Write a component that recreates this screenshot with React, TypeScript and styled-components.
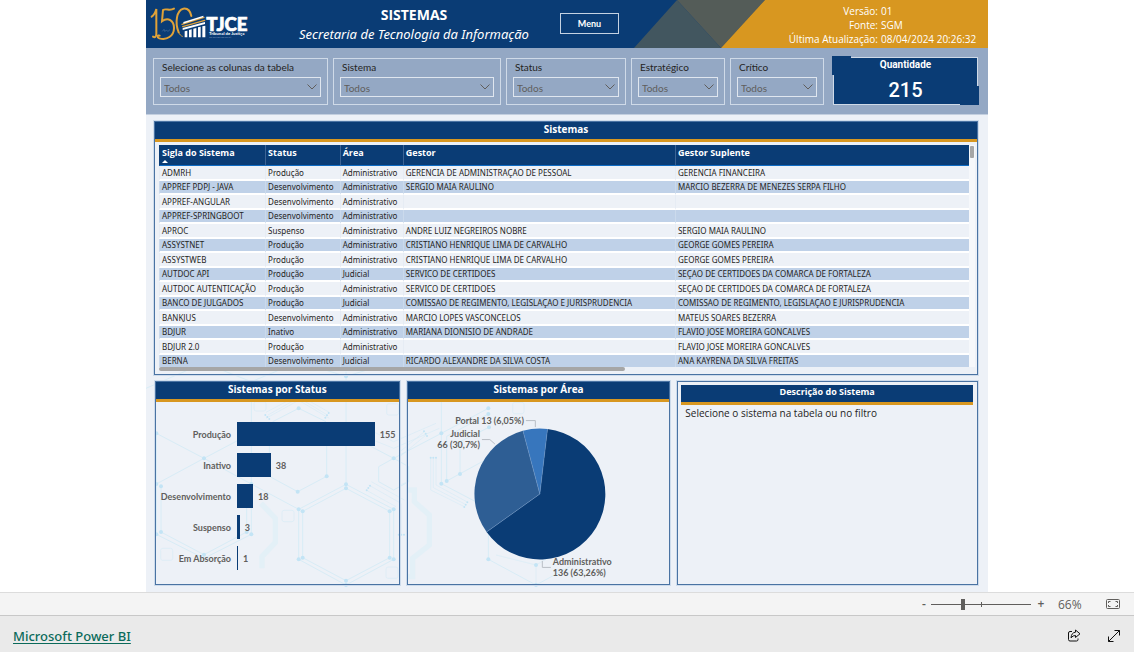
import React from 'react';
import styled, { createGlobalStyle } from 'styled-components';

const navy = '#0a3c75';
const orange = '#d89720';
const frame = '#4a73a3';
const ui = `'Open Sans', 'Noto Sans', sans-serif`;
const noto = `'Noto Sans', 'Open Sans', sans-serif`;
const narrow = `Lato, 'Open Sans', sans-serif`;
const din = `Roboto, 'Liberation Sans', sans-serif`;

const GlobalStyle = createGlobalStyle`
  * { box-sizing: border-box; }
  html, body, #root { min-height: 100vh; }
  body { margin: 0; background: #fff; font-family: ${ui}; color: #252423; }
  h1, h2, p, dl, dd, dt { margin: 0; }
  button, select, input { font: inherit; margin: 0; }
`;

const Page = styled.div`
  min-height: 100vh;
  display: flex;
  flex-direction: column;
`;

const Report = styled.main`
  position: relative;
  flex: 1;
  width: 100%;
  max-width: 842px;
  margin: 0 auto;
  background: #edf1f7;
  display: flex;
  flex-direction: column;
`;

const Header = styled.header`
  position: relative;
  height: 48px;
  background: ${navy};
  color: #fff;
  display: flex;
  align-items: center;
  overflow: hidden;
`;

const HeaderShapes = styled.svg`
  position: absolute;
  right: 0;
  top: 0;
  width: 354px;
  height: 48px;
`;

const Logo = styled.svg`
  width: 105px;
  height: 48px;
  flex: none;
`;

const Heading = styled.div`
  flex: none;
  width: 326px;
  text-align: center;
  white-space: nowrap;
`;

const Title = styled.h1`
  font-size: 14px;
  line-height: 18px;
  font-weight: 700;
  padding-top: 1px;
`;

const Subtitle = styled.p`
  font-family: ${noto};
  font-size: 13px;
  line-height: 20px;
  font-style: italic;
`;

const MenuButton = styled.button`
  position: relative;
  flex: none;
  width: 59px;
  height: 21px;
  margin: 0 auto 2px -17px;
  padding: 0;
  border: 1px solid #c5d2e2;
  background: ${navy};
  color: #fff;
  font-family: ${narrow};
  font-size: 9px;
  font-weight: 700;
`;

const Meta = styled.dl`
  position: relative;
  display: grid;
  grid-template-columns: auto 96px;
  column-gap: 3px;
  padding: 1px 11px 0 0;
  font-size: 10px;
  line-height: 14px;
  white-space: nowrap;
  dt { text-align: right; }
`;

const Filters = styled.section`
  height: 67px;
  padding: 10px 10px 9px 7px;
  background: #94a8c4;
  border-bottom: 1px solid #c3cfdf;
  display: grid;
  grid-template-columns: 175fr 168fr 120fr 94fr 94fr 149fr;
  column-gap: 5px;
`;

const FilterBox = styled.div`
  min-width: 0;
  border: 1px solid #cfdae8;
  padding: 0 6px;
  font-family: ${narrow};
  label { display: block; font-size: 10px; line-height: 16px; padding-left: 2px; white-space: nowrap; }
`;

const SelectWrap = styled.div`
  position: relative;
  margin-top: 2px;
  svg { position: absolute; right: 4px; top: 7px; pointer-events: none; }
`;

const Select = styled.select`
  display: block;
  width: 100%;
  height: 20px;
  appearance: none;
  border: 1px solid #dfe6ef;
  border-radius: 0;
  background: transparent;
  color: #605e5c;
  font-size: 10px;
  padding: 1px 3px 0;
`;

const CountCard = styled.div`
  position: relative;
  margin: -1px 0 0 4px;
  background: ${navy};
  border: 1px solid #cfdae8;
  color: #fff;
  text-align: center;
  font-family: ${din};
  font-weight: 700;
  &::before, &::after { content: ''; position: absolute; width: 19px; height: 19px; background: ${navy}; }
  &::before { left: -2px; top: -2px; }
  &::after { right: -2px; bottom: -1px; }
`;

const CountLabel = styled.h2`
  position: relative;
  font-size: 10px;
  line-height: 14px;
`;

const CountValue = styled.p`
  position: relative;
  font-size: 20px;
  line-height: 24px;
  margin-top: 6px;
  font-weight: 500;
`;

const Panel = styled.section`
  position: relative;
  min-width: 0;
  border: 1px solid ${frame};
  box-shadow: 0 0 0 1px #cddbeb;
`;

const PanelTitle = styled.h2<{ $size?: number }>`
  height: 20px;
  line-height: 14px;
  border-bottom: 3px solid ${orange};
  background: ${navy};
  color: #fff;
  text-align: center;
  font-size: ${(p) => p.$size ?? 10}px;
  font-weight: 700;
`;

const TablePanel = styled(Panel)`
  margin: 6px 10px 0 8px;
`;

const TableArea = styled.div`
  display: flex;
  padding: 3px 2px 0 4px;
`;

const Table = styled.table`
  flex: 1;
  width: 100%;
  min-width: 0;
  table-layout: fixed;
  border-collapse: separate;
  border-spacing: 0;
  white-space: nowrap;
  font-family: ${noto};
  font-size: 8px;
  th {
    height: 21px;
    padding: 0 2px;
    background: ${navy};
    color: #fff;
    border-bottom: 1px solid #0f6cc4;
    border-left: 1px solid #3c6495;
    font-family: ${ui};
    font-size: 9px;
    line-height: 15px;
    text-align: left;
    vertical-align: top;
  }
  th:first-child { border-left-color: ${navy}; }
  td {
    padding: 0 2px;
    line-height: 13px;
    border-bottom: 2px solid #fff;
    border-left: 1px solid #e6ecf4;
  }
  tbody tr:nth-child(even) td {
    background: #bfd1e8;
    line-height: 12px;
    border-left-color: #cbdaec;
  }
  tbody tr:last-child td { border-bottom: 0; }
`;

const SortMark = styled.span`
  display: block;
  width: 0;
  height: 0;
  border: 3px solid transparent;
  border-top: 0;
  border-bottom-color: #fff;
`;

const VerticalScroll = styled.div`
  flex: none;
  width: 6px;
  background: #f6f8fb;
  padding: 1px 0 0 1px;
  &::before { content: ''; display: block; width: 4px; height: 12px; background: #a6a6a6; border-radius: 1px; }
`;

const HorizontalScroll = styled.div`
  height: 7px;
  margin: 0 8px 0 4px;
  &::before { content: ''; display: block; width: 57.5%; height: 4px; background: #a6a6a6; border-radius: 2px; }
`;

const Bottom = styled.div`
  display: grid;
  grid-template-columns: 245fr 264fr 301fr;
  column-gap: 7px;
  margin: 6px 10px 7px 9px;
  min-height: 204px;
  flex: 1;
`;

const Pattern = styled.svg`
  position: absolute;
  left: 0;
  bottom: 0;
  width: 424px;
  height: 230px;
`;

const Bars = styled.div`
  padding: 20px 24px 0 0;
  display: grid;
  row-gap: 7px;
  font-family: ${narrow};
  font-size: 9px;
  font-weight: 700;
  color: #605e5c;
`;

const BarRow = styled.div`
  display: grid;
  grid-template-columns: 75px 1fr;
  column-gap: 6px;
  height: 24px;
  align-items: center;
  text-align: right;
`;

const BarTrack = styled.div`
  display: flex;
  align-items: center;
  gap: 5px;
  height: 24px;
`;

const Bar = styled.div`
  flex: none;
  height: 24px;
  background: ${navy};
`;

const Pie = styled.svg`
  display: block;
  width: 100%;
  height: 182px;
  font-family: ${narrow};
  font-size: 9px;
  font-weight: 700;
`;

const DescriptionPanel = styled(Panel)`
  padding: 3px 4px 0 3px;
`;

const Description = styled.p`
  padding: 0 4px;
  font-size: 10px;
  line-height: 17px;
`;

const ZoomBar = styled.div`
  height: 24px;
  flex: none;
  border-top: 1px solid #dcdcdc;
  border-bottom: 1px solid #c8c8c8;
  background: #f4f4f4;
  display: flex;
  align-items: center;
  justify-content: flex-end;
  padding-right: 14px;
  color: #605e5c;
  font-size: 12px;
`;

const IconButton = styled.button`
  border: 0;
  padding: 0;
  background: none;
  color: inherit;
  display: flex;
  align-items: center;
  justify-content: center;
  height: 20px;
  min-width: 14px;
  line-height: 20px;
  font-weight: 600;
  svg { display: block; }
`;

const ZoomRange = styled.input`
  appearance: none;
  width: 100px;
  height: 12px;
  margin: 0 3px 0 0;
  background:
    linear-gradient(#605e5c, #605e5c) 50px 4px / 1px 5px no-repeat,
    linear-gradient(#605e5c, #605e5c) 0 6px / 100% 1px no-repeat;
  &::-webkit-slider-thumb { appearance: none; width: 4px; height: 11px; background: #605e5c; }
`;

const ZoomValue = styled.output`
  width: 36px;
  margin-left: 10px;
  margin-right: 12px;
`;

const Footer = styled.footer`
  height: 36px;
  flex: none;
  background: #eaeaea;
  display: flex;
  align-items: center;
  gap: 26px;
  padding: 3px 13px 0;
`;

const BrandLink = styled.a`
  margin-right: auto;
  color: #0b6a5a;
  font-family: ${noto};
  font-size: 13px;
  line-height: 20px;
  font-weight: 500;
  text-underline-offset: 2px;
`;

const filters = ['Selecione as colunas da tabela', 'Sistema', 'Status', 'Estratégico', 'Crítico'];

const columns = [
  { name: 'Sigla do Sistema', width: '13.1%' },
  { name: 'Status', width: '9.2%' },
  { name: 'Área', width: '7.8%' },
  { name: 'Gestor', width: '33.6%' },
  { name: 'Gestor Suplente', width: 'auto' },
];

const systems = [
  ['ADMRH', 'Produção', 'Administrativo', 'GERENCIA DE ADMINISTRAÇAO DE PESSOAL', 'GERENCIA FINANCEIRA'],
  ['APPREF PDPJ - JAVA', 'Desenvolvimento', 'Administrativo', 'SERGIO MAIA RAULINO', 'MARCIO BEZERRA DE MENEZES SERPA FILHO'],
  ['APPREF-ANGULAR', 'Desenvolvimento', 'Administrativo', '', ''],
  ['APPREF-SPRINGBOOT', 'Desenvolvimento', 'Administrativo', '', ''],
  ['APROC', 'Suspenso', 'Administrativo', 'ANDRE LUIZ NEGREIROS NOBRE', 'SERGIO MAIA RAULINO'],
  ['ASSYSTNET', 'Produção', 'Administrativo', 'CRISTIANO HENRIQUE LIMA DE CARVALHO', 'GEORGE GOMES PEREIRA'],
  ['ASSYSTWEB', 'Produção', 'Administrativo', 'CRISTIANO HENRIQUE LIMA DE CARVALHO', 'GEORGE GOMES PEREIRA'],
  ['AUTDOC API', 'Produção', 'Judicial', 'SERVICO DE CERTIDOES', 'SEÇAO DE CERTIDOES DA COMARCA DE FORTALEZA'],
  ['AUTDOC AUTENTICAÇÃO', 'Produção', 'Administrativo', 'SERVICO DE CERTIDOES', 'SEÇAO DE CERTIDOES DA COMARCA DE FORTALEZA'],
  ['BANCO DE JULGADOS', 'Produção', 'Judicial', 'COMISSAO DE REGIMENTO, LEGISLAÇAO E JURISPRUDENCIA', 'COMISSAO DE REGIMENTO, LEGISLAÇAO E JURISPRUDENCIA'],
  ['BANKJUS', 'Desenvolvimento', 'Administrativo', 'MARCIO LOPES VASCONCELOS', 'MATEUS SOARES BEZERRA'],
  ['BDJUR', 'Inativo', 'Administrativo', 'MARIANA DIONISIO DE ANDRADE', 'FLAVIO JOSE MOREIRA GONCALVES'],
  ['BDJUR 2.0', 'Produção', 'Administrativo', '', 'FLAVIO JOSE MOREIRA GONCALVES'],
  ['BERNA', 'Desenvolvimento', 'Judicial', 'RICARDO ALEXANDRE DA SILVA COSTA', 'ANA KAYRENA DA SILVA FREITAS'],
];

const statusCounts = [
  { label: 'Produção', value: 155 },
  { label: 'Inativo', value: 38 },
  { label: 'Desenvolvimento', value: 18 },
  { label: 'Suspenso', value: 3 },
  { label: 'Em Absorção', value: 1 },
];
const maxCount = 155;

function TjceLogo() {
  return (
    <Logo viewBox="0 0 315 144" role="img" aria-label="150 anos TJCE">
      <g fill="none" stroke="#e0a238" strokeLinecap="round">
        <path d="M17 50 C24 46 28 38 31 27 V101 C31 112 26 113 21 110" strokeWidth="6" />
        <path d="M84 26 C70 34 60 24 51 30 L48 64 C66 50 84 62 84 84 C84 108 62 122 40 115 C32 112 34 104 41 107" strokeWidth="6" />
        <path d="M98 97 C86 68 92 30 112 26 C125 24 133 34 136 48" strokeWidth="6" />
        <path d="M98 97 C101 104 105 108 109 109" strokeWidth="3" />
        <path d="M108 73 L174 52 M110 80 L176 61" strokeWidth="4" />
      </g>
      <path d="M49 94 l5 -6 l2 6 l5 -3 l5 3 l6 -5" fill="none" stroke="#8aa3c2" strokeWidth="1" />
      <path d="M112 66 L172 47 V52 L112 71 Z M110 84 L177 66 V72 L110 90 Z" fill="#fff" />
      <path d="M116 94 l8 -2 V112 h-8 Z M129 90 l8 -2 V112 h-8 Z M142 86 l9 -2 V112 h-9 Z M156 82 l8 -2 V112 h-8 Z M169 79 l9 -2 V112 h-9 Z" fill="#fff" />
      <text x="181" y="92" fill="#fff" stroke="#fff" strokeWidth="2" fontFamily="Lato, sans-serif" fontWeight="900" fontSize="56">TJCE</text>
      <text x="189" y="105" fill="#fff" fontFamily={narrow} fontWeight="700" fontSize="13">Tribunal de Justiça</text>
      <text x="190" y="115" fill="#7f9abc" fontFamily={narrow} fontSize="6">DO ESTADO DO CEARÁ</text>
    </Logo>
  );
}

function HexPattern() {
  const dots = [
    [458, 100], [174, 250], [31, 175], [31, 327], [45, 334], [316, 327], [31, 478], [45, 471], [316, 478], [302, 471],
    [174, 539], [542, 304], [455, 350], [600, 328], [600, 340], [743, 250], [458, 403], [470, 409], [743, 403],
    [731, 409], [458, 553], [470, 548], [743, 553], [731, 548], [600, 617], [600, 630], [600, 4], [1027, 100],
    [1027, 117], [886, 175], [886, 326], [902, 318], [942, 297], [1029, 157], [1027, 553], [1170, 570], [1170, 630],
  ];
  return (
    <Pattern viewBox="0 -39 1272 690" aria-hidden="true">
      <g fill="none" stroke="#d8ecf6" strokeWidth="3">
        <path d="M0 40 L174 -36 L316 20 M316 80 V327 M600 -10 V328 M316 20 L458 -39 L600 4 L743 -39" />
        <path d="M31 175 L174 250 L316 175 M31 175 V327 L174 250 L316 327 V478 L174 550 L31 478 V327 M45 334 V471 L174 539 L302 471 V334 M316 327 L458 403" />
        <path d="M600 328 L743 403 V553 L600 630 L458 553 V403 Z M600 340 L731 409 V548 L600 617 L470 548 V409 Z" />
        <path d="M458 100 L380 140 M458 100 L540 140 M370 210 V304 L455 350 L542 304 V210" />
        <path d="M743 250 L788 275 V320 L743 345 L698 320 V275 Z M600 175 L743 250 M743 250 L886 175" />
        <path d="M360 130 L458 76 L550 130 M366 120 L458 68 L544 120 M360 112 L458 60 L550 112" strokeWidth="2" />
        <path d="M620 170 L743 220 L880 160 M640 150 L743 200 L870 145" strokeWidth="2" />
        <path d="M668 330 L765 385 V478 M660 345 L750 395 M676 320 L775 375" strokeWidth="2" />
        <path d="M886 80 V326 M1027 100 L886 175 M1027 117 L902 184 V318 L1027 250 M1029 157 L942 200 V297 M886 326 L1027 400 V553 L1170 630 L1312 553" />
        <path d="M854 248 V345 L955 395 M862 248 V338 L958 388 M870 248 V330 L962 380 M762 230 L835 170 M762 245 L840 180" strokeWidth="2" />
        <path d="M1050 540 L1170 570 L1290 500 M1170 570 V630 M762 330 L790 318" strokeWidth="2" />
        <rect x="324" y="80" width="36" height="28" rx="6" strokeWidth="2" />
        <rect x="722" y="86" width="36" height="34" rx="6" strokeWidth="2" />
        <rect x="408" y="406" width="36" height="34" rx="6" strokeWidth="2" />
        <rect x="44" y="520" width="36" height="36" rx="6" strokeWidth="2" />
        <rect x="720" y="576" width="36" height="34" rx="6" strokeWidth="2" />
        <rect x="1100" y="82" width="34" height="34" rx="6" strokeWidth="2" />
      </g>
      <g fill="none" stroke="#e3f0f7" strokeWidth="16">
        <path d="M345 385 L388 430 V502 L348 545 V580" />
        <path d="M784 345 H805 V380 L850 420 V510 L800 550 V605 H784" />
      </g>
      <g fill="#c3e4f5">
        {dots.map(([x, y], i) => <circle key={i} cx={x} cy={y} r="6" />)}
        {[358, 364, 370].map((x, i) => <circle key={x} cx={x} cy={120 + i * 6} r="3" />)}
        {[538, 543, 548].map((x, i) => <circle key={x} cx={x} cy={128 - i * 7} r="3" />)}
        {[662, 667, 672].map((x, i) => <circle key={x} cx={x} cy={346 - i * 7} r="3" />)}
        {[834, 839, 843].map((x, i) => <circle key={x} cx={x} cy={169 + i * 7} r="3" />)}
        {[955, 959, 964].map((x, i) => <circle key={x} cx={x} cy={396 - i * 7} r="3" />)}
        {[854, 862, 870].map((x) => <circle key={x} cx={x} cy="248" r="3" />)}
        {[758, 766, 774].map((x) => <circle key={x} cx={x} cy="479" r="3" />)}
      </g>
    </Pattern>
  );
}

function AreaPie() {
  return (
    <Pie viewBox="0 0 262 182" role="img" aria-label="Sistemas por Área">
      <path d="M132 92 L139.7 27 A65.5 65.5 0 1 1 78.7 130 Z" fill={navy} />
      <path d="M132 92 L78.7 130 A65.5 65.5 0 0 1 115.1 28.7 Z" fill="#2e5e94" />
      <path d="M132 92 L115.1 28.7 A65.5 65.5 0 0 1 139.7 27 Z" fill="#3776bd" />
      <path d="M139.7 27 L132 92 L78.7 130 M132 92 L115.1 28.7" fill="none" stroke="#6f96c4" strokeWidth="0.5" />
      <path d="M118 18.500 H127.500 V25 M74 37.500 H82 L87 42 M134.500 159 V165.500 H143" fill="none" stroke="#b9bec5" />
      <g fill="#605e5c">
        <text x="116" y="22" textAnchor="end">Portal 13 (6,05%)</text>
        <text x="72" y="35" textAnchor="end">Judicial</text>
        <text x="72" y="46" textAnchor="end">66 (30,7%)</text>
        <text x="145" y="163">Administrativo</text>
        <text x="145" y="174">136 (63,26%)</text>
      </g>
    </Pie>
  );
}

export default function App() {
  return (
    <Page>
      <GlobalStyle />
      <Report>
        <Header>
          <HeaderShapes viewBox="0 0 354 48" aria-hidden="true">
            <path d="M0 48 L43 0 L87 48 Z" fill="#42565f" />
            <path d="M43 0 H131 L87 48 Z" fill="#545c58" />
            <path d="M131 0 H354 V48 H87 Z" fill={orange} />
          </HeaderShapes>
          <TjceLogo />
          <Heading>
            <Title>SISTEMAS</Title>
            <Subtitle>Secretaria de Tecnologia da Informação</Subtitle>
          </Heading>
          <MenuButton type="button">Menu</MenuButton>
          <Meta>
            <dt>Versão:</dt><dd>01</dd>
            <dt>Fonte:</dt><dd>SGM</dd>
            <dt>Última Atualização:</dt><dd>08/04/2024 20:26:32</dd>
          </Meta>
        </Header>

        <Filters>
          {filters.map((name, i) => (
            <FilterBox key={name}>
              <label htmlFor={`filter-${i}`}>{name}</label>
              <SelectWrap>
                <Select id={`filter-${i}`} defaultValue="Todos"><option>Todos</option></Select>
                <svg width="10" height="6" viewBox="0 0 10 6" fill="none" stroke="#605e5c" aria-hidden="true">
                  <path d="M0.500 0.500 L5 5 L9.500 0.500" />
                </svg>
              </SelectWrap>
            </FilterBox>
          ))}
          <CountCard>
            <CountLabel>Quantidade</CountLabel>
            <CountValue>215</CountValue>
          </CountCard>
        </Filters>

        <HexPattern />

        <TablePanel>
          <PanelTitle>Sistemas</PanelTitle>
          <TableArea>
            <Table>
              <colgroup>
                {columns.map((c) => <col key={c.name} width={c.width} />)}
              </colgroup>
              <thead>
                <tr>
                  {columns.map((c, i) => (
                    <th key={c.name} scope="col">{c.name}{i === 0 && <SortMark />}</th>
                  ))}
                </tr>
              </thead>
              <tbody>
                {systems.map((row) => (
                  <tr key={row[0]}>
                    {row.map((cell, i) => <td key={i}>{cell || '\u00a0'}</td>)}
                  </tr>
                ))}
              </tbody>
            </Table>
            <VerticalScroll />
          </TableArea>
          <HorizontalScroll />
        </TablePanel>

        <Bottom>
          <Panel>
            <PanelTitle>Sistemas por Status</PanelTitle>
            <Bars>
              {statusCounts.map((s) => (
                <BarRow key={s.label}>
                  <span>{s.label}</span>
                  <BarTrack>
                    <Bar style={{ width: `${(s.value / maxCount) * 100}%` }} />
                    <span>{s.value}</span>
                  </BarTrack>
                </BarRow>
              ))}
            </Bars>
          </Panel>
          <Panel>
            <PanelTitle>Sistemas por Área</PanelTitle>
            <AreaPie />
          </Panel>
          <DescriptionPanel>
            <PanelTitle $size={9}>Descrição do Sistema</PanelTitle>
            <Description>Selecione o sistema na tabela ou no filtro</Description>
          </DescriptionPanel>
        </Bottom>
      </Report>

      <ZoomBar>
        <IconButton type="button" aria-label="Reduzir">-</IconButton>
        <ZoomRange type="range" min="0" max="100" defaultValue="31" aria-label="Zoom" />
        <IconButton type="button" aria-label="Ampliar">+</IconButton>
        <ZoomValue>66%</ZoomValue>
        <IconButton type="button" aria-label="Ajustar à página">
          <svg width="14" height="11" viewBox="0 0 14 11" fill="none" stroke="#605e5c">
            <rect x="0.500" y="0.500" width="13" height="9" rx="1" />
            <path d="M2.500 4 V2.500 H4.500 M9.500 2.500 H11.500 V4 M11.500 6 V7.500 H9.500 M4.500 7.500 H2.500 V6" />
          </svg>
        </IconButton>
      </ZoomBar>
      <Footer>
        <BrandLink href="#">Microsoft Power BI</BrandLink>
        <IconButton type="button" aria-label="Compartilhar">
          <svg width="14" height="14" viewBox="0 0 14 14" fill="none" stroke="#111" strokeLinejoin="round">
            <path d="M5 2.500 H3 Q1.500 2.500 1.500 4 V10.500 Q1.500 12 3 12 H9.500 Q11 12 11 10.500 V9.500" />
            <path d="M8.500 1 L13 4.800 L8.500 8.500 V6.500 Q6 6.300 4 8.800 Q4.500 3.500 8.500 3.200 Z" />
          </svg>
        </IconButton>
        <IconButton type="button" aria-label="Tela inteira">
          <svg width="14" height="14" viewBox="0 0 14 14" fill="none" stroke="#111">
            <path d="M1.500 12.500 L12.500 1.500 M7.500 1.500 H12.500 V6.500 M1.500 7.500 V12.500 H6.500" />
          </svg>
        </IconButton>
      </Footer>
    </Page>
  );
}
